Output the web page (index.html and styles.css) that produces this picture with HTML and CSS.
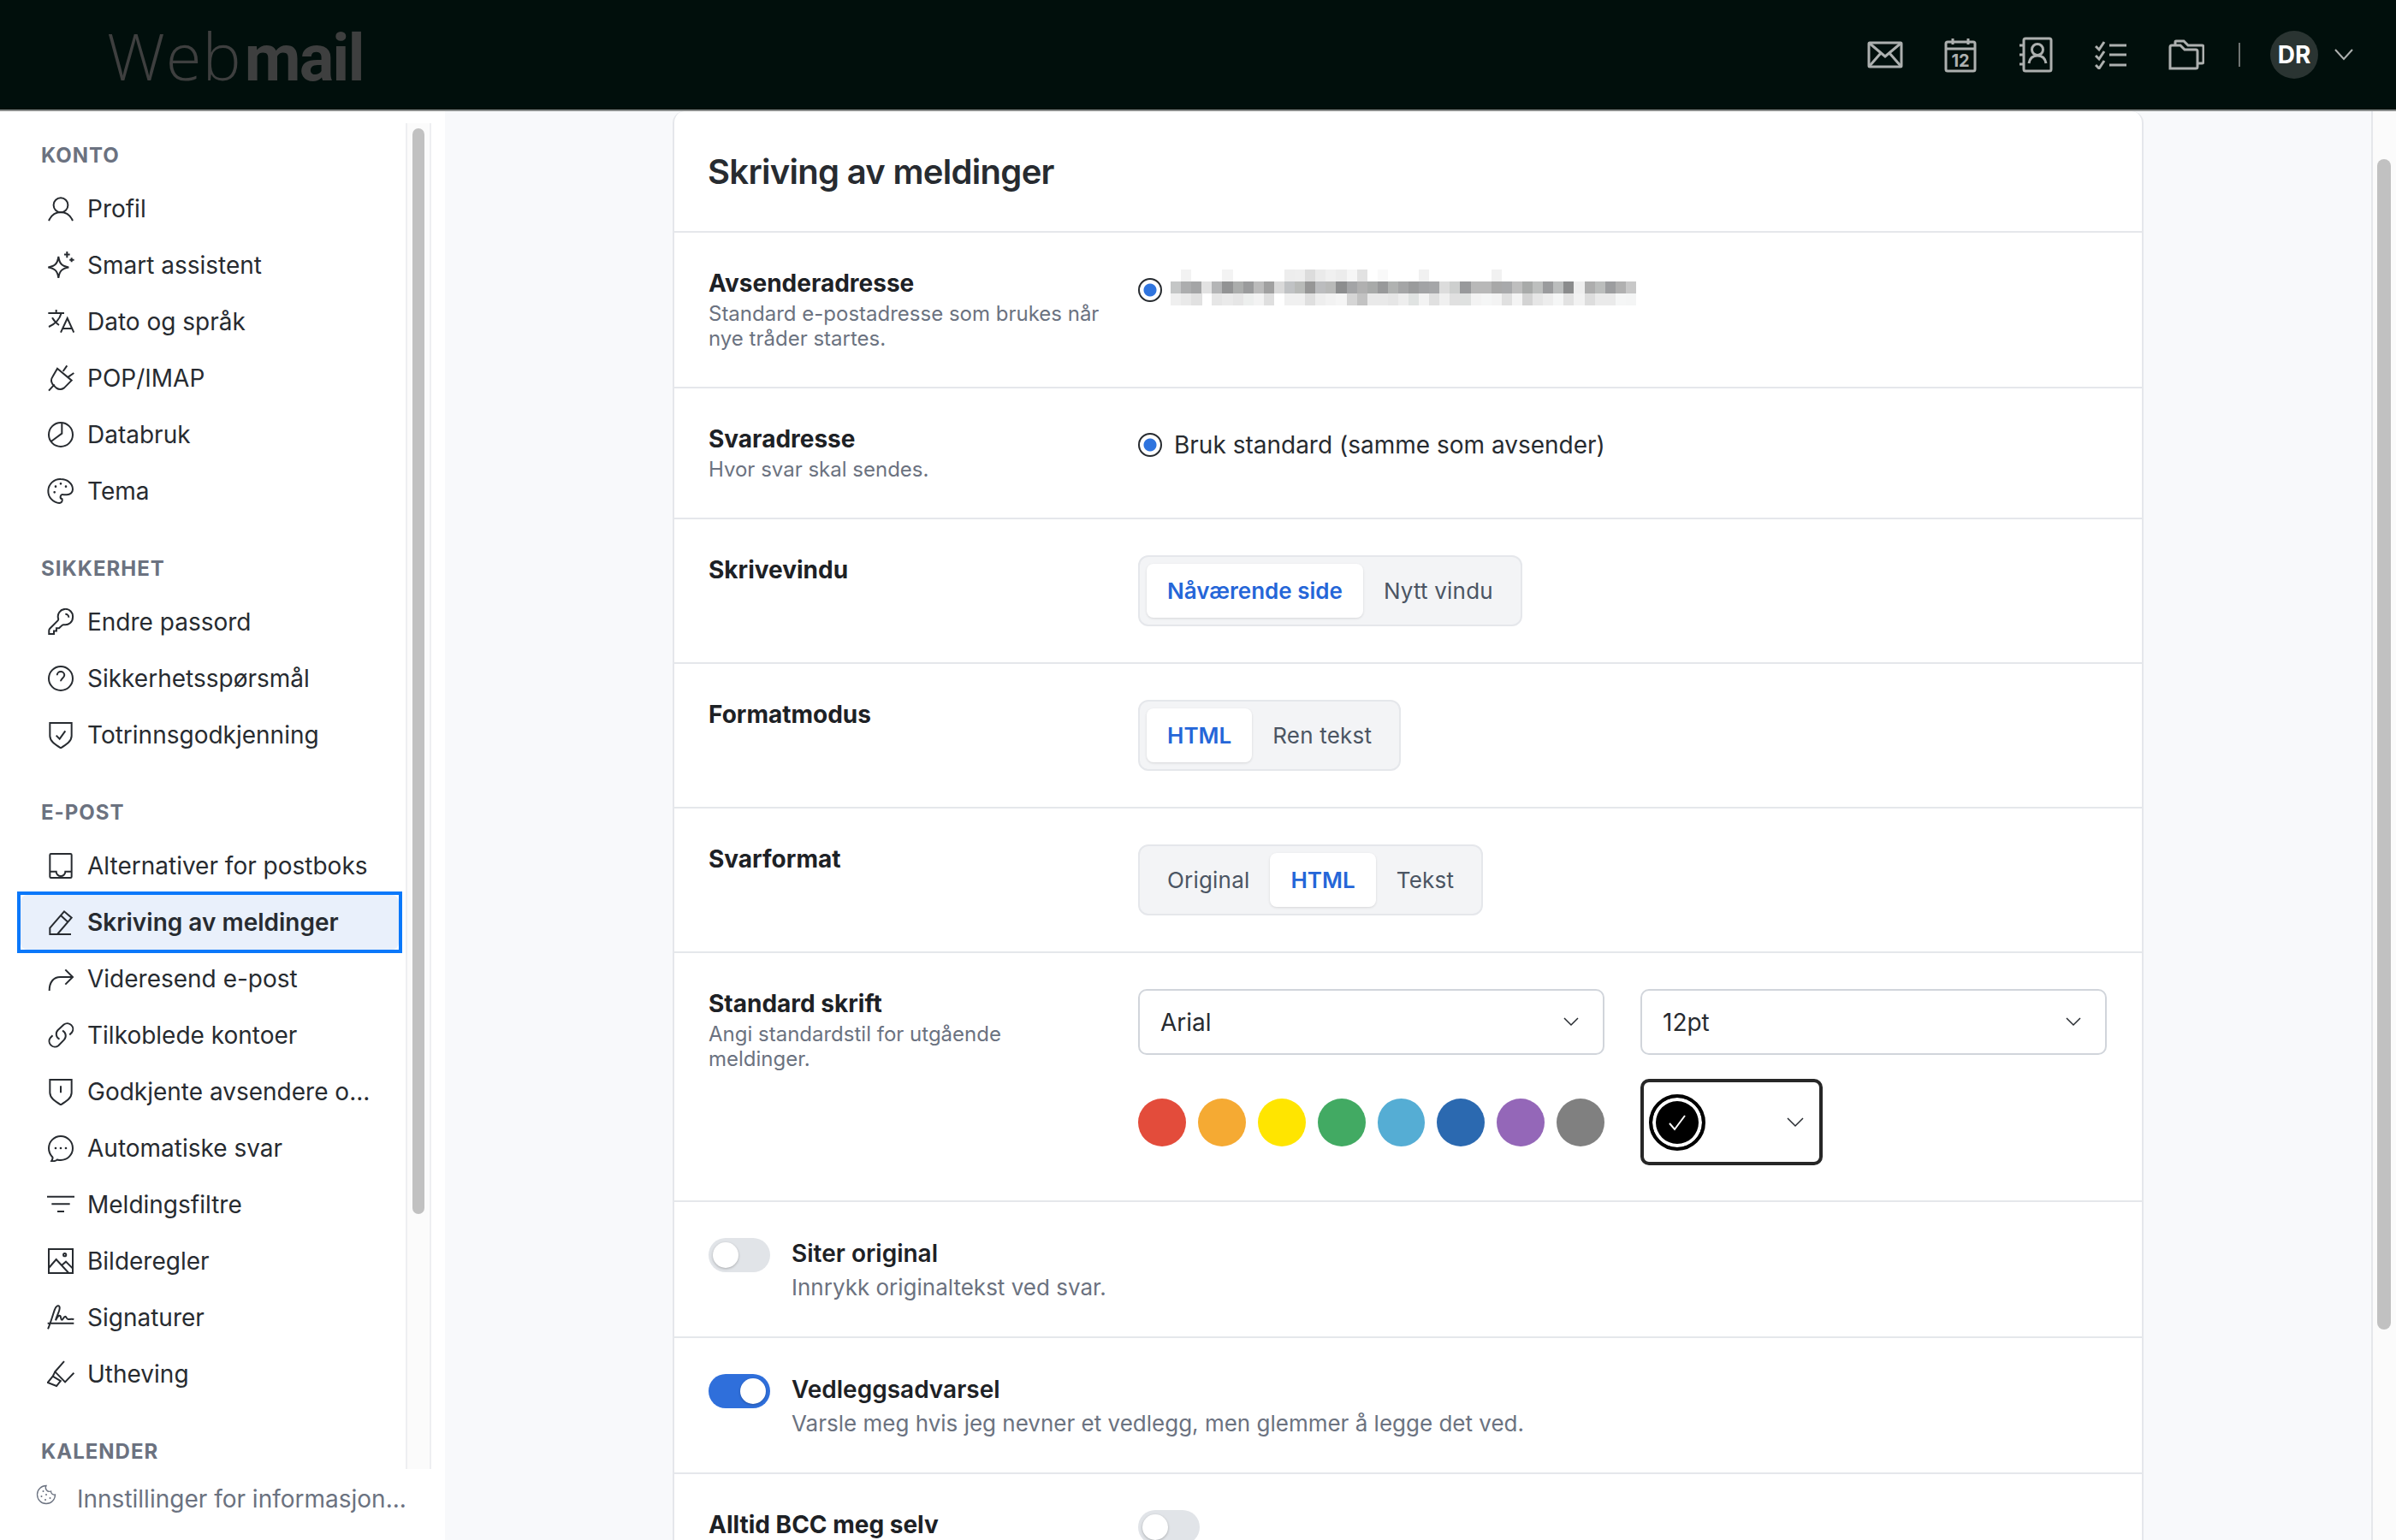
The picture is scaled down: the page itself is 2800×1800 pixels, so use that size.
FILE: index.html
```html
<!DOCTYPE html>
<html lang="en">
<head>
    <meta charset="UTF-8">
    <title>Webmail</title>
    <link rel="stylesheet" href="styles.css">
</head>
<body>
    <div class="app">
        <header class="topbar">
            <div class="logo">Web<b>mail</b></div>
            <div class="top-actions">
                <div class="top-icon">
                    <svg width="42" height="32" viewBox="0 0 42 32"><rect x="2" y="2" width="38" height="28" rx="1"/><path d="M2 2l19 16L40 2M2 30l14-16M40 30L26 14"/></svg>
                </div>
                <div class="top-icon">
                    <svg width="38" height="42" viewBox="0 0 38 42"><rect x="2" y="6" width="34" height="34" rx="2"/><path d="M2 14h34M10 2v7M28 2v7"/><text x="19" y="35" class="cal-num">12</text></svg>
                </div>
                <div class="top-icon">
                    <svg width="40" height="42" viewBox="0 0 40 42"><rect x="6" y="2" width="32" height="38" rx="2"/><path d="M1 10h5M1 21h5M1 32h5M12 31c1-6 5-9 10-9s9 3 10 9"/><circle cx="22" cy="15" r="6.500"/></svg>
                </div>
                <div class="top-icon">
                    <svg width="38" height="34" viewBox="0 0 38 34"><path d="M1 7l4 4 6-9M1 18l4 4 6-9M1 29l4 4 6-9M17 6h20M17 17h20M17 29h20"/></svg>
                </div>
                <div class="top-icon">
                    <svg width="42" height="36" viewBox="0 0 42 36"><path d="M2 34h30a2 2 0 0 0 2-2V14a2 2 0 0 0-2-2H19l-5-5H4a2 2 0 0 0-2 2v25zM8 7V3a1 1 0 0 1 1-1h9l5 5h16a2 2 0 0 1 2 2v17a2 2 0 0 1-2 2h-5"/></svg>
                </div>
                <div class="top-sep"></div>
                <div class="avatar">DR</div>
                <svg class="top-caret" width="22" height="14" viewBox="0 0 22 14"><path d="M1 1l10 11L21 1"/></svg>
            </div>
        </header>

        <div class="layout">
            <aside class="sidebar">
                <nav class="side-nav">
                    <div class="nav-title">KONTO</div>
                    <a class="nav-item"><svg class="ico" viewBox="0 0 24 24"><circle cx="12" cy="8.800" r="6.300"/><path d="M1.500 22.500C3.500 18 7.500 15 12 15s8.500 3 10.500 7.500"/></svg>Profil</a>
                    <a class="nav-item"><svg class="ico" viewBox="0 0 24 24"><path d="M10 4.500c.8 6 3 8.300 9 9.300-6 1-8.200 3.300-9 9.300-.8-6-3-8.300-9-9.300 6-1 8.200-3.300 9-9.300zM17.500 0v5.500M15 2.700h5M21.500 5.500v3.600M19.700 7.300h4"/></svg>Smart assistent</a>
                    <a class="nav-item"><svg class="ico" viewBox="0 0 24 24"><path d="M12 21.500l5.800-12.500 5.700 12.500M14 18h7.500M1 4.500h14M8 1.500v3M12.500 4.500C11 10 7 14 1.500 16.500M4.500 8.500c1.500 2.500 3.500 5 6 6.500"/></svg>Dato og språk</a>
                    <a class="nav-item"><svg class="ico" viewBox="0 0 24 24"><path d="M9 3.500L21.500 14 15 20.500a6 6 0 0 1-7 0L5 17.500a6 6 0 0 1 0-7zM1.500 23l5-5.500M17.500 1l-3.500 5M23.500 7.500l-5 3.500"/></svg>POP/IMAP</a>
                    <a class="nav-item"><svg class="ico" viewBox="0 0 24 24"><circle cx="12" cy="12" r="10.500"/><path d="M13 1.500V11L3.500 18"/></svg>Databruk</a>
                    <a class="nav-item"><svg class="ico" viewBox="0 0 24 24"><path d="M11 22.500A10.500 10.500 0 0 1 12 1.500c5.800 0 10.500 4 10.500 9 0 1.200-.5 2.400-1.500 3.300-1 .9-2.300 1.300-3.700 1.300h-3a2 2 0 0 0-1.100 3.900c.6 2-.6 3.500-2.700 3.500z"/><path class="dots" d="M6.500 13h.01M7.500 8h.01M12 5.500h.01M16.500 8h.01"/></svg>Tema</a>

                    <div class="nav-title">SIKKERHET</div>
                    <a class="nav-item"><svg class="ico" viewBox="0 0 24 24"><path d="M16 5a3 3 0 0 1 3 3m3.500 0a6.500 6.500 0 0 1-7.600 6.400c-.6-.1-1.200 0-1.700.5L10.500 17.500H8.200v2.300H6v2.700H1.700v-3c0-.6.250-1.200.7-1.700l7-7c.4-.4.570-1 .46-1.700A6.500 6.500 0 1 1 22.500 8z"/></svg>Endre passord</a>
                    <a class="nav-item"><svg class="ico" viewBox="0 0 24 24"><circle cx="12" cy="12" r="10.500"/><path d="M8.800 9.200c0-2 1.500-3.200 3.200-3.200s3.200 1.300 3.200 3c0 2.800-3.200 2.800-3.200 5.500M12 18h.01"/></svg>Sikkerhetsspørsmål</a>
                    <a class="nav-item"><svg class="ico" viewBox="0 0 24 24"><path d="M2.500 1.500h19V13c0 4.500-4.500 7.500-9.500 10.500C7 20.500 2.500 17.500 2.500 13V1.500z"/><path d="M8 12.500l3 3 5-7"/></svg>Totrinnsgodkjenning</a>

                    <div class="nav-title">E-POST</div>
                    <a class="nav-item"><svg class="ico" viewBox="0 0 24 24"><rect x="2.500" y="1.500" width="19" height="21" rx="1"/><path d="M2.500 17H8a4 4 0 0 0 8 0h5.500"/></svg>Alternativer for postboks</a>
                    <a class="nav-item active"><svg class="ico" viewBox="0 0 24 24"><path d="M2.500 22.500V17L15 2.500l6.500 5.500L9 22.500H2.500zm0 0h18.500M12 6l6.500 6"/></svg>Skriving av meldinger</a>
                    <a class="nav-item"><svg class="ico" viewBox="0 0 24 24"><path d="M2 22.500c0-8 4-12 9.500-12H22.500M16 4l6.500 6.500L16 17"/></svg>Videresend e-post</a>
                    <a class="nav-item"><svg class="ico" viewBox="0 0 24 24"><path d="M13.500 8a5 5 0 0 1 1.400 8l-5 5.200a5 5 0 0 1-7-7l2-2m14.800-.6 2-2a5 5 0 0 0-7-7L9.500 7.500a5 5 0 0 0 1.400 8"/></svg>Tilkoblede kontoer</a>
                    <a class="nav-item"><svg class="ico" viewBox="0 0 24 24"><path d="M2.500 1.500h19V13c0 4.500-4.500 7.500-9.500 10.500C7 20.500 2.500 17.500 2.500 13V1.500z"/><path d="M12 7v6M12 16.500h.01"/></svg>Godkjente avsendere o...</a>
                    <a class="nav-item"><svg class="ico" viewBox="0 0 24 24"><path d="M22.500 12c0 5.800-4.700 10.500-10.500 10.500a11 11 0 0 1-3-.4 6.500 6.500 0 0 1-4.400 1.300c-.3 0-.6 0-.8-.1a5 5 0 0 0 1.100-2.500c.1-.5-.1-1-.6-1.400C2.700 17.500 1.500 15 1.500 12 1.500 6.200 6.200 1.500 12 1.500S22.500 6.200 22.500 12z"/><path class="dots" d="M7.500 12h.01M12 12h.01M16.500 12h.01"/></svg>Automatiske svar</a>
                    <a class="nav-item"><svg class="ico" viewBox="0 0 24 24"><path d="M0 5h24M4 11.500h16M9 18h6"/></svg>Meldingsfiltre</a>
                    <a class="nav-item"><svg class="ico" viewBox="0 0 24 24"><rect x="1.500" y="1.500" width="21" height="21"/><path d="M1.500 18l6.500-7.500 11 12M13 15.500l3.500-3 6 6"/><circle cx="15.500" cy="6.500" r="1.200"/></svg>Bilderegler</a>
                    <a class="nav-item"><svg class="ico" viewBox="0 0 24 24"><path d="M.8 22C3 17 5 10 6.500 5.500 7.800 1.500 10.500.5 11 3c.5 3-2.500 7-3.500 11.500 1.500-3 3-5 4-4s.3 3.500 1.500 3.500c1 0 1.500-3 3-3 1 0 1 2.500 2.500 2.500 1 0 3-.5 5 0M.5 17h23"/></svg>Signaturer</a>
                    <a class="nav-item"><svg class="ico" viewBox="0 0 24 24"><path d="M15 .8L7 10l8.800 9 7.700-8M7 10l-2 4-4.500 5.500 7.800 3 3.200-4M5 14l7.500 4.500"/></svg>Utheving</a>

                    <div class="nav-title">KALENDER</div>
                </nav>
                <div class="side-track"><div class="side-thumb"></div></div>
                <div class="side-foot">
                    <svg class="foot-ico" viewBox="0 0 24 24"><path d="M12 1.500a10.500 10.500 0 1 0 10.500 10.500 4 4 0 0 1-5-4 4.500 4.500 0 0 1-5.500-6.500z"/><path class="dots" d="M8.500 8h.01M6.500 14h.01M12 12h.01M16.500 16h.01M11 18h.01"/></svg>
                    <span>Innstillinger for informasjon...</span>
                </div>
            </aside>

            <main class="main">
                <div class="content">
                    <section class="card">
                        <h1 class="card-title">Skriving av meldinger</h1>

                        <div class="row">
                            <div>
                                <div class="row-label">Avsenderadresse</div>
                                <div class="row-desc">Standard e-postadresse som brukes når nye tråder startes.</div>
                            </div>
                            <div class="radio-line addr">
                                <span class="radio"></span>
                                <svg class="pix" width="544" height="42" viewBox="0 0 45 3" preserveAspectRatio="none" shape-rendering="crispEdges">
                                    <rect x="1" y="0" fill="#f2f2f2"/><rect x="5" y="0" fill="#f3f3f3"/><rect x="11" y="0" fill="#ededed"/><rect x="12" y="0" fill="#eeeeee"/><rect x="13" y="0" fill="#dcdcdc"/><rect x="14" y="0" fill="#eaeaea"/><rect x="15" y="0" fill="#f0f0f0"/><rect x="16" y="0" fill="#ececec"/><rect x="17" y="0" fill="#f6f6f6"/><rect x="18" y="0" fill="#e2e2e2"/><rect x="20" y="0" fill="#f9f9f9"/><rect x="24" y="0" fill="#f1f1f1"/><rect x="31" y="0" fill="#f1f1f1"/>
                                    <rect x="0" y="1" fill="#c4c6c6"/><rect x="1" y="1" fill="#acadae"/><rect x="2" y="1" fill="#a4a5a6"/><rect x="3" y="1" fill="#e2e2e2"/><rect x="4" y="1" fill="#b4b5b6"/><rect x="5" y="1" fill="#929394"/><rect x="6" y="1" fill="#abadac"/><rect x="7" y="1" fill="#9a9b9c"/><rect x="8" y="1" fill="#bbbbbb"/><rect x="9" y="1" fill="#a0a0a0"/><rect x="10" y="1" fill="#d9d9d9"/><rect x="11" y="1" fill="#c0c2c4"/><rect x="12" y="1" fill="#b8bab8"/><rect x="13" y="1" fill="#969696"/><rect x="14" y="1" fill="#bbbcbe"/><rect x="15" y="1" fill="#b8b9b8"/><rect x="16" y="1" fill="#8c8d8e"/><rect x="17" y="1" fill="#a3a4a6"/><rect x="18" y="1" fill="#b0b0b0"/><rect x="19" y="1" fill="#a8aaa9"/><rect x="20" y="1" fill="#98999a"/><rect x="21" y="1" fill="#b0b2b1"/><rect x="22" y="1" fill="#a4a5a6"/><rect x="23" y="1" fill="#9a9b9c"/><rect x="24" y="1" fill="#a2a3a5"/><rect x="25" y="1" fill="#a5a6a8"/><rect x="26" y="1" fill="#dcdcdc"/><rect x="27" y="1" fill="#cdcfce"/><rect x="28" y="1" fill="#98999b"/><rect x="29" y="1" fill="#b8b8b8"/><rect x="30" y="1" fill="#b8b8b8"/><rect x="31" y="1" fill="#a8a8a8"/><rect x="32" y="1" fill="#a8a9ab"/><rect x="33" y="1" fill="#bebebe"/><rect x="34" y="1" fill="#a8aaa9"/><rect x="35" y="1" fill="#bdbfbe"/><rect x="36" y="1" fill="#9a9b9d"/><rect x="37" y="1" fill="#bbbdbd"/><rect x="38" y="1" fill="#8a8b8c"/><rect x="39" y="1" fill="#eeeeee"/><rect x="40" y="1" fill="#adadad"/><rect x="41" y="1" fill="#bbbdbc"/><rect x="42" y="1" fill="#9c9d9f"/><rect x="43" y="1" fill="#b0b0b0"/><rect x="44" y="1" fill="#c8c8c8"/>
                                    <rect x="0" y="2" fill="#efefef"/><rect x="1" y="2" fill="#e9e9e9"/><rect x="2" y="2" fill="#e1e1e1"/><rect x="4" y="2" fill="#e6e6e6"/><rect x="5" y="2" fill="#eaeaea"/><rect x="6" y="2" fill="#e6e6e6"/><rect x="7" y="2" fill="#edefee"/><rect x="8" y="2" fill="#f3f3f3"/><rect x="9" y="2" fill="#dfdfdf"/><rect x="11" y="2" fill="#f0f0f0"/><rect x="12" y="2" fill="#f0f0f0"/><rect x="13" y="2" fill="#dfdfdf"/><rect x="14" y="2" fill="#eeeeee"/><rect x="15" y="2" fill="#f2f2f2"/><rect x="16" y="2" fill="#f5f5f5"/><rect x="17" y="2" fill="#d5d5d5"/><rect x="18" y="2" fill="#c2c2c2"/><rect x="19" y="2" fill="#e9e9e9"/><rect x="20" y="2" fill="#e9e9e9"/><rect x="21" y="2" fill="#e6e6e6"/><rect x="22" y="2" fill="#eeeeee"/><rect x="23" y="2" fill="#e0e3e2"/><rect x="24" y="2" fill="#f3f3f3"/><rect x="25" y="2" fill="#e0e0e0"/><rect x="26" y="2" fill="#f0f0f0"/><rect x="27" y="2" fill="#e0e0e0"/><rect x="28" y="2" fill="#dfe1e0"/><rect x="29" y="2" fill="#f3f3f3"/><rect x="30" y="2" fill="#f5f6f6"/><rect x="31" y="2" fill="#f3f3f3"/><rect x="32" y="2" fill="#e0e0e0"/><rect x="33" y="2" fill="#f4f4f4"/><rect x="34" y="2" fill="#d3d3d3"/><rect x="35" y="2" fill="#e6e6e6"/><rect x="36" y="2" fill="#ededed"/><rect x="37" y="2" fill="#f5f6f6"/><rect x="38" y="2" fill="#e2e2e2"/><rect x="39" y="2" fill="#f2f2f2"/><rect x="40" y="2" fill="#dddddd"/><rect x="41" y="2" fill="#eaeaea"/><rect x="42" y="2" fill="#eaeaea"/><rect x="43" y="2" fill="#f5f6f6"/><rect x="44" y="2" fill="#f4f5f5"/>
                                </svg>
                            </div>
                        </div>

                        <div class="row">
                            <div>
                                <div class="row-label">Svaradresse</div>
                                <div class="row-desc">Hvor svar skal sendes.</div>
                            </div>
                            <div class="radio-line">
                                <span class="radio"></span>
                                <span>Bruk standard (samme som avsender)</span>
                            </div>
                        </div>

                        <div class="row">
                            <div class="row-label">Skrivevindu</div>
                            <div class="segments">
                                <span class="seg on">Nåværende side</span>
                                <span class="seg">Nytt vindu</span>
                            </div>
                        </div>

                        <div class="row">
                            <div class="row-label">Formatmodus</div>
                            <div class="segments">
                                <span class="seg on">HTML</span>
                                <span class="seg">Ren tekst</span>
                            </div>
                        </div>

                        <div class="row">
                            <div class="row-label">Svarformat</div>
                            <div class="segments">
                                <span class="seg">Original</span>
                                <span class="seg on">HTML</span>
                                <span class="seg">Tekst</span>
                            </div>
                        </div>

                        <div class="row row-font">
                            <div>
                                <div class="row-label">Standard skrift</div>
                                <div class="row-desc">Angi standardstil for utgående meldinger.</div>
                            </div>
                            <div class="font-grid">
                                <div class="select">Arial<svg class="caret" width="18" height="11" viewBox="0 0 18 11"><path d="M1 1l8 8 8-8"/></svg></div>
                                <div class="select">12pt<svg class="caret" width="18" height="11" viewBox="0 0 18 11"><path d="M1 1l8 8 8-8"/></svg></div>
                                <div class="swatches">
                                    <span class="swatch c-red"></span>
                                    <span class="swatch c-orange"></span>
                                    <span class="swatch c-yellow"></span>
                                    <span class="swatch c-green"></span>
                                    <span class="swatch c-sky"></span>
                                    <span class="swatch c-blue"></span>
                                    <span class="swatch c-purple"></span>
                                    <span class="swatch c-gray"></span>
                                </div>
                                <div class="color-box">
                                    <span class="color-dot"><svg width="24" height="20" viewBox="0 0 24 20"><path d="M3 11l6 7L21 2"/></svg></span>
                                    <svg class="caret" width="20" height="12" viewBox="0 0 20 12"><path d="M1 1l9 9 9-9"/></svg>
                                </div>
                            </div>
                        </div>

                        <div class="row-toggle">
                            <span class="switch"></span>
                            <div>
                                <div class="toggle-label">Siter original</div>
                                <div class="toggle-desc">Innrykk originaltekst ved svar.</div>
                            </div>
                        </div>

                        <div class="row-toggle">
                            <span class="switch on"></span>
                            <div>
                                <div class="toggle-label">Vedleggsadvarsel</div>
                                <div class="toggle-desc">Varsle meg hvis jeg nevner et vedlegg, men glemmer å legge det ved.</div>
                            </div>
                        </div>

                        <div class="row">
                            <div class="row-label">Alltid BCC meg selv</div>
                            <div><span class="switch"></span></div>
                        </div>
                    </section>
                </div>
                <div class="main-track"><div class="main-thumb"></div></div>
            </main>
        </div>
    </div>
</body>
</html>
```

FILE: styles.css
```css
* {
    margin: 0;
    padding: 0;
    box-sizing: border-box;
}

body {
    font-family: 'Inter', 'Liberation Sans', sans-serif;
    font-size: 28px;
    color: #272b30;
    background: #fff;
    height: 100vh;
    overflow: hidden;
}

.app {
    display: flex;
    flex-direction: column;
    height: 100vh;
}

/* Top bar */
.topbar {
    flex: none;
    height: 130px;
    background: #010f0c;
    border-bottom: 2px solid #8a8d8c;
    padding: 0 50px 0 125px;
    display: flex;
    justify-content: space-between;
    align-items: center;
}

.logo {
    font-family: 'Open Sans', 'Liberation Sans', sans-serif;
    font-size: 76px;
    font-weight: 300;
    letter-spacing: 1px;
    color: #3e3f3f;
}

.logo b {
    font-family: 'Roboto', 'Liberation Sans', sans-serif;
    font-weight: 700;
    letter-spacing: -2px;
    margin-left: 3px;
}

.top-actions {
    display: flex;
    align-items: center;
}

.top-icon {
    width: 88px;
    display: flex;
    justify-content: center;
}

.top-icon svg {
    fill: none;
    stroke: #adb0af;
    stroke-width: 3;
}

.cal-num {
    font-size: 20px;
    font-weight: 700;
    fill: #adb0af;
    stroke: none;
    text-anchor: middle;
}

.top-sep {
    width: 2px;
    height: 28px;
    background: #6f7473;
    margin: 0 35px 0 17px;
}

.avatar {
    width: 56px;
    height: 56px;
    border-radius: 50%;
    background: #2a3432;
    color: #fff;
    font-size: 28px;
    font-weight: 700;
    display: flex;
    align-items: center;
    justify-content: center;
}

.top-caret {
    margin-left: 19px;
    fill: none;
    stroke: #adb0af;
    stroke-width: 2;
}

.layout {
    flex: 1;
    display: flex;
    min-height: 0;
}

/* Sidebar */
.sidebar {
    position: relative;
    width: 520px;
    flex: none;
    background: #fff;
    display: flex;
    overflow: hidden;
}

.side-nav {
    width: 474px;
    flex: none;
    padding: 33px 8px 0 24px;
}

.nav-title {
    font-size: 24px;
    font-weight: 700;
    line-height: 36px;
    letter-spacing: 1px;
    color: #6b7280;
    padding: 1px 0 0 24px;
    margin: 39px 0 11px;
}

.nav-title:first-child {
    margin-top: 0;
}

.nav-item {
    height: 66px;
    display: flex;
    align-items: center;
    gap: 15px;
    padding-left: 31px;
    white-space: nowrap;
}

.nav-item.active {
    position: relative;
    font-weight: 600;
    background: #e9f0fb;
    border-radius: 8px;
    height: 64px;
    margin: 1px 0;
}

.nav-item.active::before {
    content: "";
    position: absolute;
    inset: -4px;
    border: 4px solid #0a78fa;
}

.ico {
    width: 32px;
    height: 32px;
    flex: none;
    fill: none;
    stroke: #272b30;
    stroke-width: 1.500;
}

.dots {
    stroke-width: 2;
    stroke-linecap: round;
}

.side-track {
    width: 30px;
    flex: none;
    margin: 14px 0 0;
    height: 1573px;
    background: #fbfbfb;
    border-left: 2px solid #eeeff1;
    border-right: 2px solid #eeeff1;
    padding: 6px 6px 0;
}

.side-thumb {
    height: 1269px;
    background: #c1c1c1;
    border-radius: 8px;
}

.side-foot {
    position: absolute;
    left: 0;
    right: 0;
    bottom: 0;
    height: 83px;
    background: #fff;
    padding: 0 0 14px 42px;
    display: flex;
    align-items: center;
    gap: 24px;
    color: #6b7280;
    white-space: nowrap;
}

.foot-ico {
    width: 24px;
    height: 24px;
    flex: none;
    margin-top: -10px;
    fill: none;
    stroke: #6b7280;
    stroke-width: 1.300;
}

/* Main area */
.main {
    flex: 1;
    display: flex;
    min-width: 0;
    background: #f8f9fb;
    overflow: hidden;
}

.content {
    flex: 1;
    padding-left: 266px;
}

.card {
    width: 1719px;
    background: #fff;
    border: 2px solid #e5e7eb;
    border-top: none;
    border-radius: 14px 14px 0 0;
}

.card-title {
    height: 142px;
    padding: 0 0 0 39px;
    font-size: 40px;
    font-weight: 600;
    line-height: 142px;
    letter-spacing: -0.7px;
    border-bottom: 2px solid #e5e7eb;
}

.row {
    display: grid;
    grid-template-columns: 458px 1fr;
    column-gap: 44px;
    padding: 42px 42px 42px 40px;
    border-bottom: 2px solid #e5e7eb;
}

.row-label {
    font-weight: 700;
    line-height: 35px;
    color: #1d2125;
}

.row-desc {
    margin-top: 3px;
    font-size: 24px;
    line-height: 29px;
    color: #6b7280;
}

.radio-line {
    display: flex;
    align-items: center;
    gap: 14px;
    height: 48px;
}

.addr {
    height: 50px;
    gap: 10px;
}

.radio {
    width: 28px;
    height: 28px;
    flex: none;
    border-radius: 50%;
    border: 2px solid #272b30;
    background: radial-gradient(circle, #2f74de 0 7px, #fff 8px);
}

.pix {
    margin-top: -6px;
}

.pix rect {
    width: 1.020px;
    height: 1px;
}

/* Segmented buttons */
.segments {
    display: inline-flex;
    justify-self: start;
    height: 83px;
    padding: 8px;
    background: #f3f4f6;
    border: 2px solid #e5e7eb;
    border-radius: 12px;
    font-size: 26px;
    letter-spacing: 0.2px;
}

.seg {
    padding: 0 24px;
    display: flex;
    align-items: center;
    border-radius: 8px;
    color: #4b5563;
}

.seg.on {
    background: #fff;
    color: #2566d8;
    font-weight: 600;
    letter-spacing: 0;
    box-shadow: 0 1px 3px rgba(0, 0, 0, 0.12);
}

/* Font settings */
.row-font {
    padding-bottom: 41px;
}

.font-grid {
    display: grid;
    grid-template-columns: 545px 545px;
    column-gap: 42px;
    row-gap: 28px;
}

.select {
    height: 77px;
    padding: 0 28px 0 24px;
    border: 2px solid #d1d5db;
    border-radius: 10px;
    display: flex;
    align-items: center;
    justify-content: space-between;
}

.caret {
    fill: none;
    stroke: #272b30;
    stroke-width: 1.500;
}

.swatches {
    display: flex;
    align-items: center;
    gap: 14px;
}

.swatch {
    width: 56px;
    height: 56px;
    border-radius: 50%;
}

.c-red { background: #e34c3b; }
.c-orange { background: #f5aa33; }
.c-yellow { background: #ffe500; }
.c-green { background: #42aa63; }
.c-sky { background: #55add4; }
.c-blue { background: #2b69b0; }
.c-purple { background: #9467b8; }
.c-gray { background: #808080; }

.color-box {
    width: 213px;
    height: 101px;
    border: 4px solid #272727;
    border-radius: 10px;
    padding: 0 18px 0 6px;
    display: flex;
    align-items: center;
    justify-content: space-between;
}

.color-dot {
    width: 66px;
    height: 66px;
    border-radius: 50%;
    background: #000;
    border: 4px solid #000;
    box-shadow: inset 0 0 0 4px #fff;
    display: flex;
    align-items: center;
    justify-content: center;
}

.color-dot svg {
    fill: none;
    stroke: #fff;
    stroke-width: 2;
}

/* Toggle rows */
.row-toggle {
    display: flex;
    align-items: flex-start;
    gap: 25px;
    padding: 42px 42px 39px 40px;
    border-bottom: 2px solid #e5e7eb;
}

.switch {
    display: block;
    width: 72px;
    height: 40px;
    flex: none;
    border-radius: 20px;
    background: #e1e4e8;
    padding: 5px;
}

.switch::after {
    content: "";
    display: block;
    width: 30px;
    height: 30px;
    border-radius: 50%;
    background: #fff;
    box-shadow: 0 1px 3px rgba(0, 0, 0, 0.25);
}

.switch.on {
    background: #2f6fdb;
    padding-left: 37px;
}

.toggle-label {
    font-weight: 600;
    line-height: 36px;
    color: #1d2125;
}

.toggle-desc {
    margin-top: 4px;
    line-height: 36px;
    font-size: 26px;
    color: #6b7280;
}

.main-track {
    width: 29px;
    flex: none;
    background: #fbfbfb;
    border-left: 2px solid #e5e7eb;
    padding: 56px 6px 0 5px;
}

.main-thumb {
    height: 1368px;
    background: #c1c1c1;
    border-radius: 8px;
}
```
